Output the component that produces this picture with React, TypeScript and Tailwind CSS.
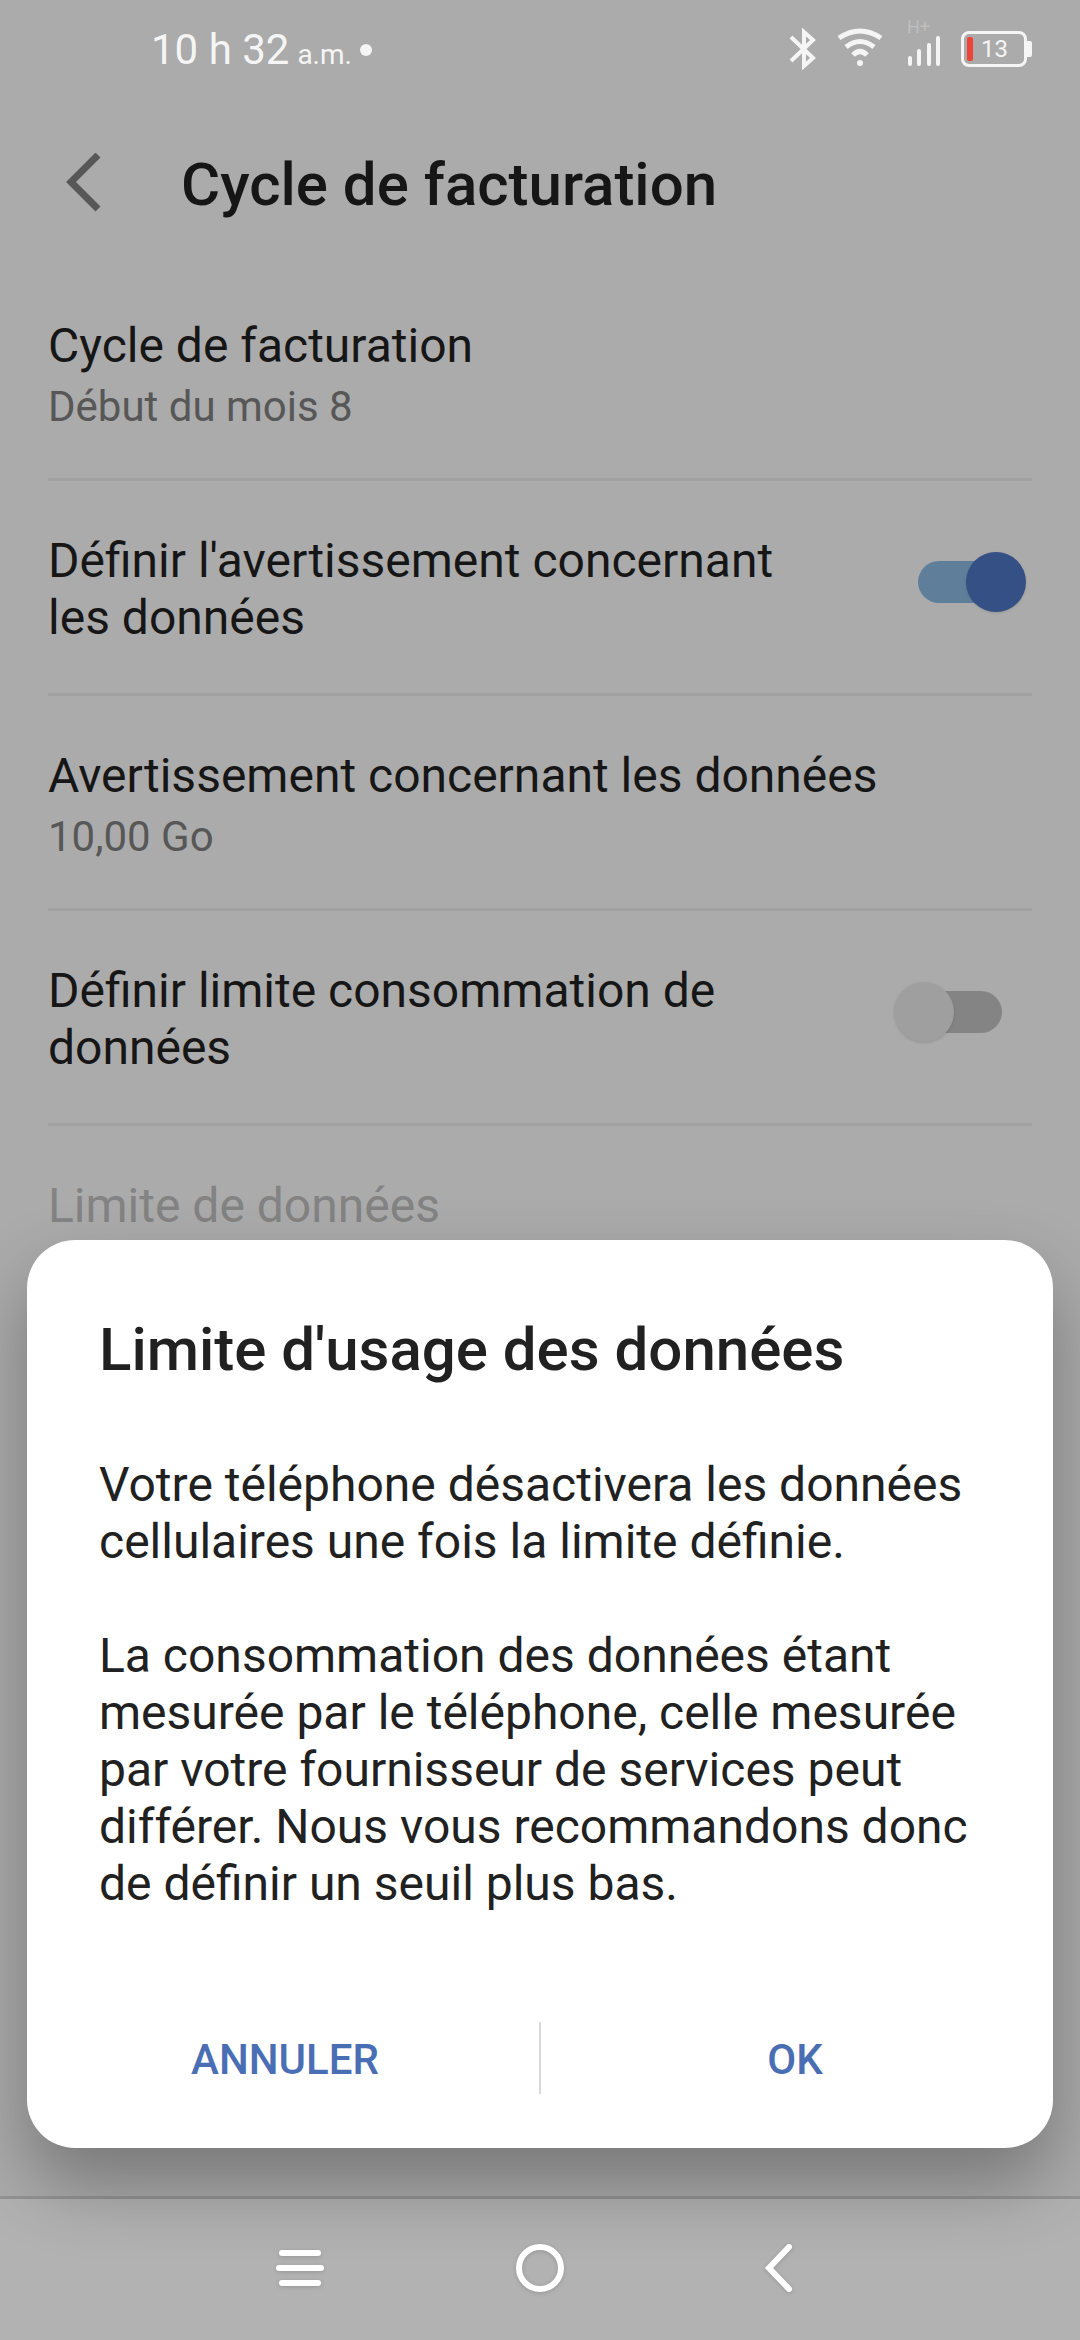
import React, { useState } from 'react';

interface SettingRow {
    id: string;
    title: string;
    summary?: string;
    toggle?: boolean;
    disabled?: boolean;
}

const rows: SettingRow[] = [
    { id: 'cycle', title: 'Cycle de facturation', summary: 'Début du mois 8' },
    { id: 'warning', title: "Définir l'avertissement concernant les données", toggle: true },
    { id: 'warning-value', title: 'Avertissement concernant les données', summary: '10,00 Go' },
    { id: 'limit', title: 'Définir limite consommation de données', toggle: true },
    { id: 'limit-value', title: 'Limite de données', disabled: true },
];

const StatusBar: React.FC = () => (
    <div className="flex h-[100px] items-center justify-between pl-[151px] pr-12 text-[#f5f5f5]">
        <div className="flex items-center gap-2">
            <p className="flex items-baseline gap-2 pt-1 text-[42px] leading-[50px]">
                10 h 32 <span className="text-[28px]">a.m.</span>
            </p>
            <span className="size-3 rounded-full bg-[#f5f5f5]" />
        </div>

        <div className="flex items-center pb-0.5">
            {/* Bluetooth */}
            <svg width="28" height="42" viewBox="0 0 28 42" fill="none" stroke="currentColor" strokeWidth="4" aria-hidden="true">
                <path d="M2 9 L24 30 L15 38 V4 L24 12 L2 33" />
            </svg>
            {/* Wifi */}
            <svg className="ml-5" width="46" height="42" viewBox="0 0 46 42" fill="none" stroke="currentColor" strokeWidth="5" aria-hidden="true">
                <path d="M2 10 Q23 -4 44 10" />
                <path d="M9 19 Q23 8 37 19" />
                <path d="M16 27 Q23 20 30 27" />
                <circle cx="23" cy="35" r="3" fill="currentColor" stroke="none" />
            </svg>
            {/* Mobile network */}
            <div className="ml-6 flex h-16 w-9 flex-col">
                <span className="text-[18px] leading-[19px] text-[#bfbfbf]">H+</span>
                <svg width="36" height="30" viewBox="0 0 36 30" fill="currentColor" aria-hidden="true">
                    <rect x="1" y="20" width="4" height="10" rx="2" />
                    <rect x="10" y="13" width="4" height="17" rx="2" />
                    <rect x="20" y="7" width="4" height="23" rx="2" />
                    <rect x="29" y="0" width="4" height="30" rx="2" />
                </svg>
            </div>
            {/* Battery */}
            <div className="ml-[18px] flex items-center">
                <div className="flex h-9 w-[66px] items-center rounded-lg border-3 border-[#f5f5f5] pl-[3px]">
                    <span className="h-6 w-1.5 rounded-xs bg-[#ee4337]" />
                    <span className="flex-1 pr-2 text-center text-[24px] leading-6">13</span>
                </div>
                <span className="h-4 w-[5px] rounded-r-xs bg-[#f5f5f5]" />
            </div>
        </div>
    </div>
);

const App: React.FC = () => {
    const [checked, setChecked] = useState<Record<string, boolean>>({ warning: true, limit: false });

    const handleToggle = (id: string) => {
        setChecked((prev) => ({ ...prev, [id]: !prev[id] }));
    };

    return (
        <div className="relative flex h-screen flex-col overflow-hidden bg-[#ababab] font-['Roboto',sans-serif] text-[#161616]">
            <StatusBar />

            <header className="flex h-[166px] items-center gap-20 pl-[66px]">
                <button type="button" aria-label="Retour" className="text-[#575757]">
                    <svg width="35" height="60" viewBox="0 0 35 60" fill="none" stroke="currentColor" strokeWidth="7">
                        <path d="M32 2 L5 29 L32 56" />
                    </svg>
                </button>
                <h1 className="pt-1 text-[60px] leading-[70px] font-medium">Cycle de facturation</h1>
            </header>

            <main className="flex-1 overflow-hidden px-12">
                {rows.map((row) => (
                    <div
                        key={row.id}
                        className={`flex h-[215px] justify-between border-b-3 border-[#a2a2a2] pt-[51px] ${row.disabled ? 'text-[#838383]' : ''}`}
                    >
                        <div className={row.toggle ? 'w-[750px]' : 'flex-1'}>
                            {row.toggle ? (
                                <label htmlFor={row.id} className="block text-[48px] leading-[57px]">
                                    {row.title}
                                </label>
                            ) : (
                                <p className="text-[48px] leading-[57px]">{row.title}</p>
                            )}
                            {row.summary && (
                                <p className="mt-2 text-[42px] leading-[49px] text-[#575757]">{row.summary}</p>
                            )}
                        </div>
                        {row.toggle && (
                            <input
                                id={row.id}
                                type="checkbox"
                                role="switch"
                                checked={checked[row.id]}
                                onChange={() => handleToggle(row.id)}
                                className="relative mt-5 mr-1.5 h-[60px] w-[132px] appearance-none
                                before:absolute before:top-[9px] before:left-6 before:h-[42px] before:w-[84px] before:rounded-full before:bg-[#848484]
                                after:absolute after:top-0 after:left-0 after:size-[60px] after:rounded-full after:bg-[#9f9f9f] after:shadow-sm
                                checked:before:bg-[#5e7e9a] checked:after:left-[72px] checked:after:bg-[#355085]"
                            />
                        )}
                    </div>
                ))}
            </main>

            {/* System navigation */}
            <nav className="flex h-36 items-center justify-center gap-48 border-t-3 border-[#949494] bg-[#b2b2b2] pb-[3px] text-white">
                <button type="button" aria-label="Applications récentes" className="relative z-20 drop-shadow-sm">
                    <svg width="48" height="48" viewBox="0 0 48 48" fill="currentColor">
                        <rect x="3" y="6" width="42" height="6" rx="3" />
                        <rect x="0" y="21" width="48" height="6" rx="3" />
                        <rect x="3" y="36" width="42" height="6" rx="3" />
                    </svg>
                </button>
                <button type="button" aria-label="Accueil" className="relative z-20 drop-shadow-sm">
                    <svg width="48" height="48" viewBox="0 0 48 48" fill="none" stroke="currentColor" strokeWidth="6">
                        <circle cx="24" cy="24" r="21" />
                    </svg>
                </button>
                <button type="button" aria-label="Précédent" className="relative z-20 drop-shadow-sm">
                    <svg width="48" height="48" viewBox="0 0 48 48" fill="none" stroke="currentColor" strokeWidth="6" strokeLinecap="round">
                        <path d="M33 3 L13 24 L33 45" />
                    </svg>
                </button>
            </nav>

            {/* Bottom dialog */}
            <div
                role="dialog"
                aria-labelledby="dialog-title"
                className="absolute inset-x-[27px] bottom-48 z-10 rounded-[48px] bg-white px-[72px] pt-[75px] pb-[54px] text-[#212121] shadow-[0_36px_72px_rgba(0,0,0,0.3)]"
            >
                <h2 id="dialog-title" className="text-[60px] leading-[70px] font-medium">
                    Limite d'usage des données
                </h2>
                <div className="mt-[71px] space-y-[57px] text-[48px] leading-[57px]">
                    <p>Votre téléphone désactivera les données cellulaires une fois la limite définie.</p>
                    <p>
                        La consommation des données étant mesurée par le téléphone, celle mesurée par votre
                        fournisseur de services peut différer. Nous vous recommandons donc de définir un seuil plus
                        bas.
                    </p>
                </div>
                <div className="-mx-[68px] mt-[110px] flex h-[72px] items-start text-[42px] leading-[75px] font-medium text-[#4a6eb4]">
                    <button type="button" className="flex-1">ANNULER</button>
                    <span className="h-[72px] w-0.5 bg-[#d9d9d9]" />
                    <button type="button" className="flex-1">OK</button>
                </div>
            </div>
        </div>
    );
};

export default App;
